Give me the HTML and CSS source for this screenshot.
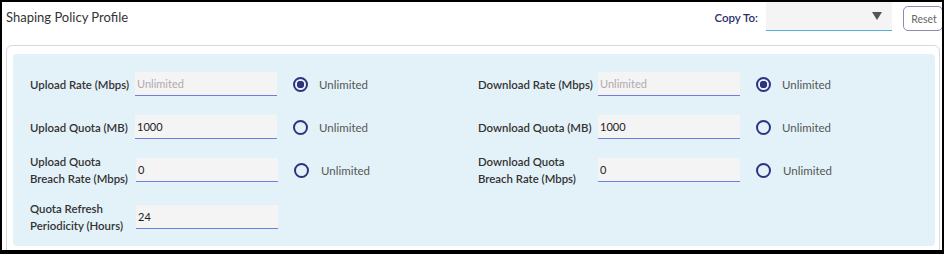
FILE: index.html
```html
<!DOCTYPE html>
<html lang="en">

<head>
    <meta charset="UTF-8">
    <meta name="viewport" content="width=device-width, initial-scale=1.0">
    <title>Shaping Policy Profile</title>
    <link rel="stylesheet" href="styles.css">
</head>

<body>
    <div id="frame">
        <div class="header">
            <h1>Shaping Policy Profile</h1>
            <div class="copy-to">
                <label for="copy">Copy To:</label>
                <div class="select" id="copy"><span class="caret"></span></div>
                <button type="button" class="reset">Reset</button>
            </div>
        </div>
        <div class="panel">
            <form class="fields" action="#">
                <div class="row">
                    <div class="field left">
                        <label for="up-rate">Upload Rate (Mbps)</label>
                        <input type="text" id="up-rate" placeholder="Unlimited">
                        <input type="radio" name="up-rate-u" checked>
                        <span class="opt">Unlimited</span>
                    </div>
                    <div class="field right">
                        <label for="down-rate">Download Rate (Mbps)</label>
                        <input type="text" id="down-rate" placeholder="Unlimited">
                        <input type="radio" name="down-rate-u" checked>
                        <span class="opt">Unlimited</span>
                    </div>
                </div>
                <div class="row">
                    <div class="field left">
                        <label for="up-quota">Upload Quota (MB)</label>
                        <input type="text" id="up-quota" value="1000">
                        <input type="radio" name="up-quota-u">
                        <span class="opt">Unlimited</span>
                    </div>
                    <div class="field right">
                        <label for="down-quota">Download Quota (MB)</label>
                        <input type="text" id="down-quota" value="1000">
                        <input type="radio" name="down-quota-u">
                        <span class="opt">Unlimited</span>
                    </div>
                </div>
                <div class="row wide">
                    <div class="field left">
                        <label for="up-breach">Upload Quota<br>Breach Rate (Mbps)</label>
                        <input type="text" id="up-breach" value="0">
                        <input type="radio" name="up-breach-u">
                        <span class="opt">Unlimited</span>
                    </div>
                    <div class="field right">
                        <label for="down-breach">Download Quota<br>Breach Rate (Mbps)</label>
                        <input type="text" id="down-breach" value="0">
                        <input type="radio" name="down-breach-u">
                        <span class="opt">Unlimited</span>
                    </div>
                </div>
                <div class="row wide last">
                    <div class="field left">
                        <label for="refresh">Quota Refresh<br>Periodicity (Hours)</label>
                        <input type="text" id="refresh" value="24">
                    </div>
                </div>
            </form>
        </div>
    </div>
</body>

</html>
```

FILE: styles.css
```css
* {
    margin: 0;
    padding: 0;
    box-sizing: border-box;
}

body {
    font-family: Lato, "Liberation Sans", sans-serif;
    background: #fff;
}

#frame {
    width: 944px;
    height: 254px;
    border: 2px solid #000;
    border-bottom-width: 4px;
    overflow: hidden;
}

.header {
    height: 30px;
    margin-bottom: 13px;
    padding-left: 4px;
    display: flex;
    align-items: center;
    justify-content: space-between;
}

h1 {
    font-size: 13px;
    font-weight: normal;
    color: #333;
}

.copy-to {
    display: flex;
    align-items: center;
    margin-right: -1px;
}

.copy-to label {
    font-size: 11.5px;
    font-weight: 600;
    color: #2c2f6b;
    margin-right: 8px;
}

.select {
    width: 126px;
    height: 29px;
    margin-top: -1px;
    background: #f4f4f4;
    border-bottom: 1px solid #4fb3d9;
    display: flex;
    align-items: center;
    justify-content: flex-end;
    padding-right: 10px;
}

.caret {
    width: 0;
    height: 0;
    border-left: 5.5px solid transparent;
    border-right: 5.5px solid transparent;
    border-top: 8px solid #555;
}

.reset {
    width: 40px;
    height: 25px;
    margin-left: 11px;
    margin-top: 3px;
    padding-left: 2px;
    background: #fff;
    border: 1px solid #8a8cb3;
    border-radius: 5px;
    font-family: inherit;
    font-size: 10.5px;
    color: #666;
}

.panel {
    margin: 0 2px 0 4px;
    height: 220px;
    border: 1px solid #d9d9d9;
    border-radius: 6px;
    padding: 8px 4px 0 6px;
}

.fields {
    height: 192px;
    background: #e3f2f8;
    border-radius: 4px;
    padding: 11px 0 0 17px;
    display: flex;
    flex-direction: column;
    gap: 5px;
}

.row {
    height: 38px;
    display: flex;
}

.row.last {
    margin-top: 4px;
}

.field {
    display: flex;
    align-items: center;
}

.field.left {
    width: 448px;
}

.field label {
    flex-shrink: 0;
    white-space: nowrap;
    font-size: 11.4px;
    font-weight: 600;
    line-height: 17px;
    color: #333;
}

.field.left label {
    width: 105px;
}

.field.right label {
    width: 120px;
}

.row.wide .field.left label {
    width: 106px;
}

.field input[type="text"] {
    width: 142px;
    height: 24px;
    background: #f4f4f4;
    border: none;
    border-bottom: 1px solid #6f80dc;
    padding: 0 2px;
    font-family: inherit;
    font-size: 11px;
    color: #222;
    outline: none;
}

.field input::placeholder {
    color: #b0a9b0;
}

.field input[type="radio"] {
    appearance: none;
    flex-shrink: 0;
    width: 15px;
    height: 15px;
    margin-left: 16px;
    border: 2px solid #2e3380;
    border-radius: 50%;
}

.field input[type="radio"]:checked {
    background: radial-gradient(circle, #2e3380 3.5px, transparent 4px);
}

.opt {
    margin-left: 11px;
    font-size: 11.5px;
    color: #555;
}

.row.wide .opt {
    margin-left: 12px;
}
```
